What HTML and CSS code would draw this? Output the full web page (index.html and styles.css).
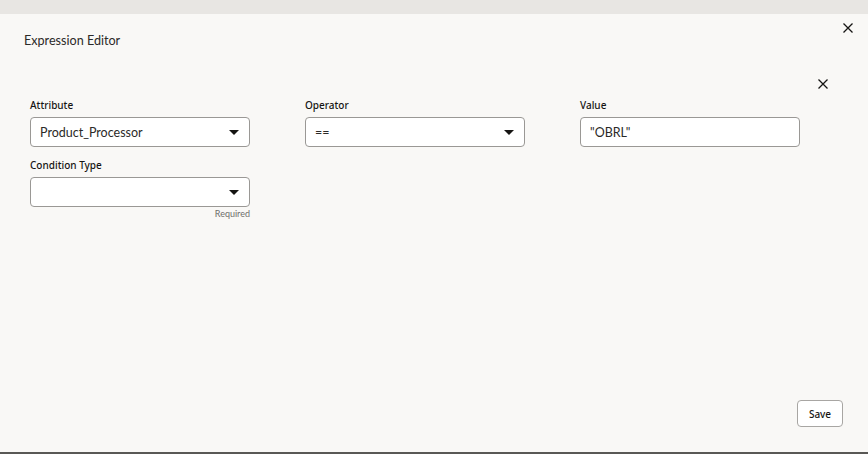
FILE: index.html
```html
<!DOCTYPE html>
<html lang="en">

<head>
    <meta charset="UTF-8">
    <meta name="viewport" content="width=device-width, initial-scale=1.0">
    <title>Expression Editor</title>
    <link rel="stylesheet" href="styles.css">
</head>

<body class="main">
    <div class="strip"></div>

    <div class="dialog">
        <div class="dialog-header">
            <h1 class="dialog-title">Expression Editor</h1>
            <button class="icon-btn" title="Close">
                <svg width="12" height="12" viewBox="0 0 12 12">
                    <path d="M1.5 1.5 L10.5 10.5 M10.5 1.5 L1.5 10.5" stroke="#161513" stroke-width="1.3" fill="none" />
                </svg>
            </button>
        </div>

        <div class="toolbar">
            <button class="icon-btn" title="Remove">
                <svg width="12" height="12" viewBox="0 0 12 12">
                    <path d="M1.5 1.5 L10.5 10.5 M10.5 1.5 L1.5 10.5" stroke="#161513" stroke-width="1.3" fill="none" />
                </svg>
            </button>
        </div>

        <div class="form-grid">
            <div class="field">
                <label class="field-label">Attribute</label>
                <div class="select-box">
                    <span class="select-text">Product_Processor</span>
                    <svg class="caret" width="10" height="5" viewBox="0 0 10 5"><path d="M0 0 H10 L5 5 Z" fill="#161513" /></svg>
                </div>
            </div>
            <div class="field">
                <label class="field-label">Operator</label>
                <div class="select-box">
                    <span class="select-text">==</span>
                    <svg class="caret" width="10" height="5" viewBox="0 0 10 5"><path d="M0 0 H10 L5 5 Z" fill="#161513" /></svg>
                </div>
            </div>
            <div class="field">
                <label class="field-label">Value</label>
                <div class="select-box">
                    <span class="select-text">"OBRL"</span>
                </div>
            </div>
            <div class="field">
                <label class="field-label">Condition Type</label>
                <div class="select-box">
                    <span class="select-text"></span>
                    <svg class="caret" width="10" height="5" viewBox="0 0 10 5"><path d="M0 0 H10 L5 5 Z" fill="#161513" /></svg>
                </div>
                <div class="help-text">Required</div>
            </div>
        </div>

        <div class="footer">
            <button class="btn">Save</button>
        </div>
    </div>
</body>

</html>
```

FILE: styles.css
```css
.main {
    margin: 0;
    height: 454px;
    background-color: #f9f8f6;
    font-family: Lato, "Noto Sans", "Liberation Sans", sans-serif;
    color: #161513;
    overflow: hidden;
}

.strip {
    height: 14px;
    background-color: #e8e6e3;
}

.dialog {
    height: 438px;
    display: flex;
    flex-direction: column;
    border-bottom: 2px solid #595855;
}

.dialog-header {
    display: flex;
    justify-content: space-between;
    align-items: flex-start;
    padding: 4px 10px 0 24px;
}

.dialog-title {
    margin: 14px 0 0 0;
    font-size: 12.6px;
    font-weight: 400;
    line-height: 18px;
    color: #2b2a28;
}

.icon-btn {
    width: 20px;
    height: 20px;
    padding: 0;
    border: none;
    background: none;
    display: flex;
    align-items: center;
    justify-content: center;
    cursor: pointer;
}

.toolbar {
    display: flex;
    justify-content: flex-end;
    padding: 0 35px 0 0;
    margin-top: 24px;
}

.form-grid {
    display: grid;
    grid-template-columns: 220px 220px 220px;
    column-gap: 55px;
    row-gap: 11px;
    padding: 4px 0 0 30px;
}

.field-label {
    display: block;
    font-family: "Noto Sans", sans-serif;
    font-size: 10px;
    font-weight: 500;
    line-height: 14px;
    margin-bottom: 5px;
    color: #161513;
}

.select-box {
    box-sizing: border-box;
    height: 30px;
    display: flex;
    align-items: center;
    justify-content: space-between;
    padding: 0 10px 0 9px;
    background-color: #fff;
    border: 1px solid #9a9895;
    border-radius: 4px;
}

.select-text {
    font-size: 12.5px;
    color: #2b2a28;
}

.help-text {
    margin-top: 1px;
    text-align: right;
    font-size: 9px;
    line-height: 12px;
    color: #6f6e6b;
}

.footer {
    margin-top: auto;
    display: flex;
    justify-content: flex-end;
    padding: 0 25px 25px 0;
}

.btn {
    width: 46px;
    height: 27px;
    padding: 0;
    background-color: #fff;
    border: 1px solid #a8a6a3;
    border-radius: 4px;
    font-family: "Noto Sans", "Liberation Sans", sans-serif;
    font-size: 10px;
    font-weight: 500;
    color: #161513;
    cursor: pointer;
}
```
